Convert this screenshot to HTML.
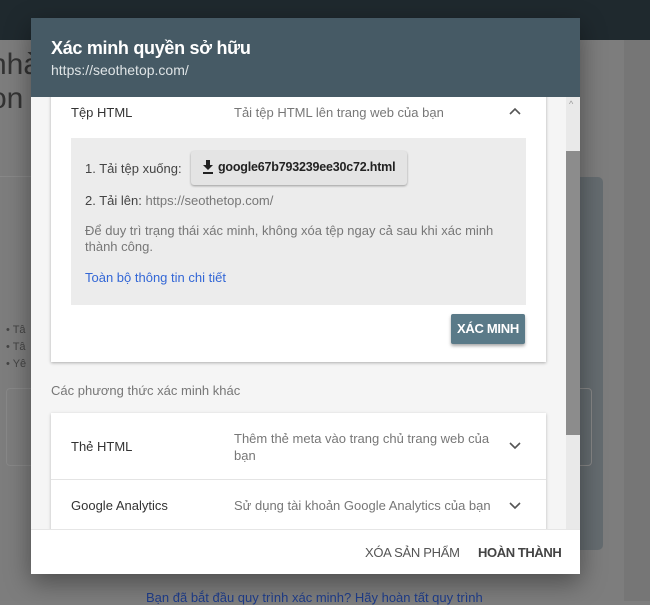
<!DOCTYPE html>
<html><head><meta charset="utf-8"><style>
body{margin:0;width:650px;height:601px;overflow:hidden;background:#7e7e7e;font-family:"Liberation Sans",sans-serif;position:relative}
.a{position:absolute}
</style></head><body>
<div class="a" style="left:0;top:0;width:650px;height:40px;background:#1f292e"></div>
<div class="a" style="left:624px;top:40px;width:26px;height:561px;background:#767676"></div>
<div class="a" style="left:0;top:40px;width:624px;height:561px;background:#7d7d7d"></div>
<div class="a" style="left:0;top:176px;width:31px;height:1px;background:#888"></div>
<div class="a" style="left:-10px;top:48px;font-size:30px;color:#333">nhà</div>
<div class="a" style="left:-10px;top:82px;font-size:30px;color:#333">on</div>
<div class="a" style="left:6px;top:322px;font-size:11px;color:#444;line-height:17px">• Tâ<br>• Tâ<br>• Yê</div>
<div class="a" style="left:6px;top:388px;width:40px;height:76px;border:1px solid #888;border-radius:4px"></div>
<div class="a" style="left:560px;top:177px;width:43px;height:373px;background:#656c70;border-radius:5px"></div>
<div class="a" style="left:560px;top:388px;width:30px;height:76px;border:1px solid #888;border-radius:4px"></div>
<div class="a" style="left:146px;top:590px;font-size:13px;color:#1e3c8a">Bạn đã bắt đầu quy trình xác minh? Hãy hoàn tất quy trình</div>

<div class="a" style="left:31px;top:18px;width:549px;height:556px;background:#f5f5f5;box-shadow:0 8px 24px rgba(0,0,0,.4);overflow:hidden">
 <div class="a" style="left:0;top:0;width:549px;height:79px;background:#465a65;z-index:2">
  <div class="a" style="left:20px;top:20px;font-size:18px;color:#fff;font-weight:bold;letter-spacing:-0.3px">Xác minh quyền sở hữu</div>
  <div class="a" style="left:20px;top:44px;font-size:14px;color:#dfe4e6">https://seothetop.com/</div>
 </div>
 <div class="a" style="left:535px;top:77px;width:14px;height:434px;background:#e9e9e9">
  <div class="a" style="left:0;top:56px;width:14px;height:284px;background:#8c8c8c"></div>
  <div class="a" style="left:3px;top:4px;font-size:9px;color:#999">^</div>
 </div>
 <div class="a" style="left:20px;top:60px;width:495px;height:284px;background:#fff;box-shadow:0 1px 3px rgba(0,0,0,.3)">
  <div class="a" style="left:20px;top:27px;font-size:13px;color:#333">Tệp HTML</div>
  <div class="a" style="left:183px;top:27px;font-size:13px;color:#777">Tải tệp HTML lên trang web của bạn</div>
  <svg class="a" style="left:458px;top:29px" width="12" height="8"><path d="M1 7L6 2L11 7" stroke="#555" stroke-width="1.6" fill="none"/></svg>
  <div class="a" style="left:20px;top:60px;width:455px;height:167px;background:#ececec">
   <div class="a" style="left:14px;top:23px;font-size:13px;color:#444">1. Tải tệp xuống:</div>
   <div class="a" style="left:120px;top:13px;width:216px;height:34px;background:#e4e4e4;border-radius:3px;box-shadow:0 1px 2px rgba(0,0,0,.35)">
    <svg class="a" style="left:11px;top:9px" width="12" height="14"><path d="M4 0h4v5h3L6 10 1 5h3zM1 12h10v2H1z" fill="#222"/></svg>
    <div class="a" style="left:27px;top:9px;font-size:12.5px;color:#222;font-weight:bold;letter-spacing:-0.2px">google67b793239ee30c72.html</div>
   </div>
   <div class="a" style="left:14px;top:55px;font-size:13px;color:#444">2. Tải lên: <span style="color:#777">https://seothetop.com/</span></div>
   <div class="a" style="left:14px;top:85px;width:410px;font-size:13px;line-height:16px;color:#777">Để duy trì trạng thái xác minh, không xóa tệp ngay cả sau khi xác minh thành công.</div>
   <div class="a" style="left:14px;top:132px;font-size:13px;color:#3367d6">Toàn bộ thông tin chi tiết</div>
  </div>
  <div class="a" style="left:400px;width:74px;height:30px;background:#5a7a88;border-radius:2px;box-shadow:0 2px 3px rgba(0,0,0,.35);color:#fff;font-size:13px;font-weight:bold;text-align:center;line-height:30px;top:236px;letter-spacing:-0.3px">XÁC MINH</div>
 </div>
 <div class="a" style="left:20px;top:365px;font-size:13px;color:#777">Các phương thức xác minh khác</div>
 <div class="a" style="left:20px;top:395px;width:495px;height:130px;background:#fff;box-shadow:0 1px 3px rgba(0,0,0,.25)">
  <div class="a" style="left:20px;top:26px;font-size:13px;color:#333">Thẻ HTML</div>
  <div class="a" style="left:183px;top:17px;width:260px;font-size:13px;line-height:17px;color:#777">Thêm thẻ meta vào trang chủ trang web của bạn</div>
  <svg class="a" style="left:458px;top:29px" width="12" height="8"><path d="M1 1L6 6L11 1" stroke="#555" stroke-width="1.6" fill="none"/></svg>
  <div class="a" style="left:0;top:66px;width:495px;height:1px;background:#e4e4e4"></div>
  <div class="a" style="left:20px;top:85px;font-size:13px;color:#333">Google Analytics</div>
  <div class="a" style="left:183px;top:85px;font-size:13px;color:#777">Sử dụng tài khoản Google Analytics của bạn</div>
  <svg class="a" style="left:458px;top:89px" width="12" height="8"><path d="M1 1L6 6L11 1" stroke="#555" stroke-width="1.6" fill="none"/></svg>
 </div>
 <div class="a" style="left:0;top:511px;width:549px;height:45px;background:#fff;border-top:1px solid #e6e6e6;z-index:3">
  <div class="a" style="left:334px;top:15px;font-size:13px;color:#555;letter-spacing:-0.3px">XÓA SẢN PHẨM</div>
  <div class="a" style="left:447px;top:15px;font-size:13px;color:#444;font-weight:bold;letter-spacing:-0.4px">HOÀN THÀNH</div>
 </div>
</div>
</body></html>
